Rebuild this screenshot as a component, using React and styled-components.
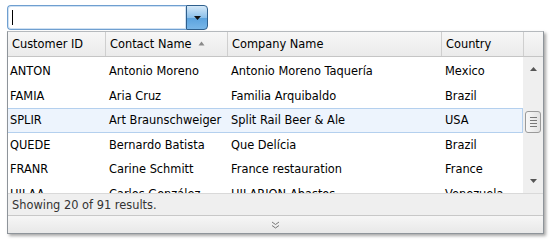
import React from "react";
import styled, { createGlobalStyle } from "styled-components";

const GlobalStyle = createGlobalStyle`
  html, body {
    margin: 0;
    padding: 0;
    background: #ffffff;
  }
  body {
    font-family: "DejaVu Sans", "Liberation Sans", sans-serif;
    font-size: 11.4px;
    color: #000;
  }
`;

const columns = [
  { key: "id", label: "Customer ID", width: 98 },
  { key: "contact", label: "Contact Name", width: 122, sorted: true },
  { key: "company", label: "Company Name", width: 214 },
  { key: "country", label: "Country", width: 82 },
];

const rows = [
  { id: "ANTON", contact: "Antonio Moreno", company: "Antonio Moreno Taquería", country: "Mexico" },
  { id: "FAMIA", contact: "Aria Cruz", company: "Familia Arquibaldo", country: "Brazil" },
  { id: "SPLIR", contact: "Art Braunschweiger", company: "Split Rail Beer & Ale", country: "USA", selected: true },
  { id: "QUEDE", contact: "Bernardo Batista", company: "Que Delícia", country: "Brazil" },
  { id: "FRANR", contact: "Carine Schmitt", company: "France restauration", country: "France" },
  { id: "HILAA", contact: "Carlos González", company: "HILARION-Abastos", country: "Venezuela" },
];

const dataCols = columns.map((c) => `${c.width}px`).join(" ");

export default function App() {
  return (
    <Page>
      <GlobalStyle />
      <Combo>
        <ComboInput>
          <Caret />
        </ComboInput>
        <PickerButton>
          <svg width="7" height="4" viewBox="0 0 7 4">
            <path d="M0 0h7L3.5 4z" fill="#111" />
          </svg>
        </PickerButton>
      </Combo>
      <Popup>
        <HeaderRow $cols={`${dataCols} 20px`}>
          {columns.map((c) => (
            <HeaderCell key={c.key}>
              {c.label}
              {c.sorted && (
                <SortIcon width="7" height="5" viewBox="0 0 7 5">
                  <path d="M3.5 0.5L6.5 4.5H0.5z" fill="#8a8a8a" />
                </SortIcon>
              )}
            </HeaderCell>
          ))}
          <HeaderCell $corner />
        </HeaderRow>
        <Body>
          <Rows>
            {rows.map((r) => (
              <Row key={r.id} $selected={r.selected} $cols={dataCols}>
                {columns.map((c, i) => (
                  <Cell key={c.key} $first={i === 0}>
                    {r[c.key]}
                  </Cell>
                ))}
              </Row>
            ))}
          </Rows>
          <ScrollBar>
            <ArrowIcon width="7" height="4" viewBox="0 0 7 4">
              <path d="M3.5 0L7 4H0z" fill="#555" />
            </ArrowIcon>
            <Track>
              <Thumb>
                <Grip />
                <Grip />
                <Grip />
                <Grip />
              </Thumb>
            </Track>
            <ArrowIcon width="7" height="4" viewBox="0 0 7 4">
              <path d="M0 0h7L3.5 4z" fill="#555" />
            </ArrowIcon>
          </ScrollBar>
        </Body>
        <Status>Showing 20 of 91 results.</Status>
        <Resizer>
          <svg width="9" height="8" viewBox="0 0 9 8">
            <path d="M1 1l3.5 2.5L8 1M1 4.5l3.5 2.5L8 4.5" fill="none" stroke="#777" strokeWidth="1" />
          </svg>
        </Resizer>
      </Popup>
    </Page>
  );
}

const Page = styled.div`
  padding: 5px 0 0 7px;
  width: 554px;
  height: 242px;
  box-sizing: border-box;
`;

const Combo = styled.div`
  display: flex;
  width: 201px;
  height: 25px;
  box-sizing: border-box;
`;

const ComboInput = styled.div`
  flex: 1;
  display: flex;
  align-items: center;
  padding-left: 4px;
  border: 1px solid #6f9fd0;
  border-right: none;
  border-radius: 4px 0 0 4px;
  background: #fff;
  box-shadow: inset 0 0 0 1px #cfe1f3;
`;

const Caret = styled.span`
  width: 1px;
  height: 15px;
  background: #000;
`;

const PickerButton = styled.div`
  width: 20px;
  display: flex;
  align-items: center;
  justify-content: center;
  border: 1px solid #2f5f8c;
  border-radius: 0 4px 4px 0;
  background: linear-gradient(#d4e8f8, #8cc0ea 50%, #5aa2de 51%, #78b6e8);
`;

const Popup = styled.div`
  margin-top: 1px;
  width: 537px;
  height: 203px;
  box-sizing: border-box;
  border: 1px solid #8e949a;
  border-top-color: #b5b9bd;
  background: #fff;
  box-shadow: 2px 2px 3px rgba(0, 0, 0, 0.35);
  display: flex;
  flex-direction: column;
`;

const HeaderRow = styled.div`
  display: grid;
  grid-template-columns: ${(p) => p.$cols};
  height: 25px;
  box-sizing: border-box;
  border-bottom: 1px solid #c5c5c5;
  background: linear-gradient(#f7f7f7, #ebebeb);
`;

const HeaderCell = styled.div`
  display: flex;
  align-items: center;
  gap: 6px;
  padding-left: 4px;
  border-right: ${(p) => (p.$corner ? "none" : "1px solid #cfcfcf")};
  white-space: nowrap;
  overflow: hidden;
`;

const SortIcon = styled.svg`
  margin-top: -1px;
`;

const Body = styled.div`
  display: flex;
  height: 136px;
  overflow: hidden;
`;

const Rows = styled.div`
  flex: 1;
  overflow: hidden;
  padding-top: 2px;
`;

const Row = styled.div`
  display: grid;
  grid-template-columns: ${(p) => p.$cols};
  height: 24.5px;
  box-sizing: border-box;
  align-items: center;
  background: ${(p) => (p.$selected ? "#edf4fd" : "transparent")};
  border: 1px solid ${(p) => (p.$selected ? "#b4d0ee" : "transparent")};
  border-left: none;
`;

const Cell = styled.div`
  padding-left: ${(p) => (p.$first ? "2px" : "3px")};
  white-space: nowrap;
  overflow: hidden;
`;

const ScrollBar = styled.div`
  width: 20px;
  display: flex;
  flex-direction: column;
  align-items: center;
  background: #efefef;
  padding: 10px 0 10px;
  box-sizing: border-box;
`;

const ArrowIcon = styled.svg`
  flex: none;
`;

const Track = styled.div`
  flex: 1;
  align-self: stretch;
  display: flex;
  flex-direction: column;
  padding-top: 40px;
  align-items: center;
`;

const Thumb = styled.div`
  width: 16px;
  height: 22px;
  box-sizing: border-box;
  border: 1px solid #9a9a9a;
  border-radius: 3px;
  background: linear-gradient(90deg, #f8f8f8, #e2e2e2);
  display: flex;
  flex-direction: column;
  align-items: center;
  justify-content: center;
  gap: 2px;
`;

const Grip = styled.span`
  width: 7px;
  height: 1px;
  background: #777;
`;

const Status = styled.div`
  height: 23px;
  box-sizing: border-box;
  display: flex;
  align-items: center;
  padding-left: 4px;
  background: #efefef;
  border-top: 1px solid #d9d9d9;
  border-bottom: 1px solid #c8c8c8;
  color: #333;
`;

const Resizer = styled.div`
  flex: 1;
  display: flex;
  align-items: center;
  justify-content: center;
  background: linear-gradient(#f6f6f6, #e8e8e8);
`;
